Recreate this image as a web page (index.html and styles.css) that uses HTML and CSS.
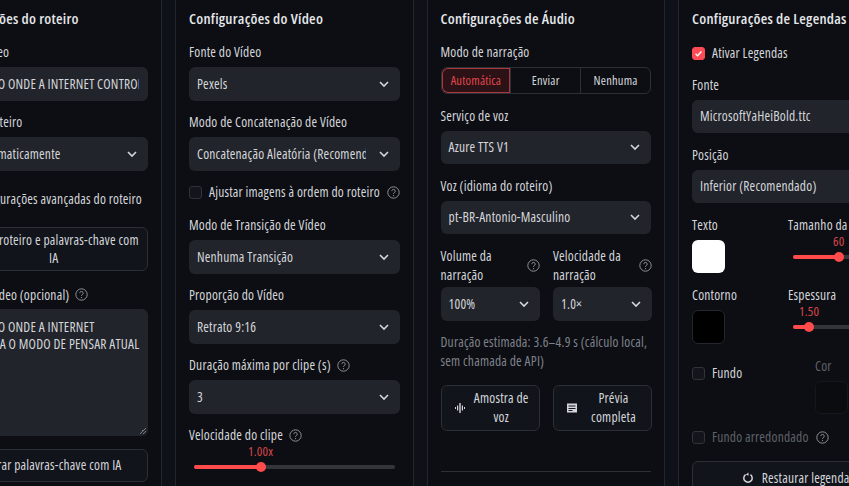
FILE: index.html
```html
<!DOCTYPE html>
<html lang="pt-BR">
<head>
    <meta charset="UTF-8">
    <meta name="viewport" content="width=device-width, initial-scale=1.0">
    <title>Configurações</title>
    <link rel="stylesheet" href="styles.css">
</head>
<body>
    <svg class="icon-defs" width="0" height="0" aria-hidden="true">
        <symbol id="help" viewBox="0 0 16 16">
            <circle cx="8" cy="8" r="7" fill="none" stroke="currentColor" stroke-width="1.2"/>
            <path d="M5.9 6.3a2.1 2.1 0 1 1 3.2 1.8c-.75.45-1.1.85-1.1 1.6" fill="none" stroke="currentColor" stroke-width="1.2"/>
            <circle cx="8" cy="11.8" r=".8" fill="currentColor"/>
        </symbol>
        <symbol id="chevron" viewBox="0 0 12 12">
            <path d="M2 4l4 4 4-4" fill="none" stroke="currentColor" stroke-width="1.6"/>
        </symbol>
    </svg>

    <div class="panels">
        <section class="panel">
            <h2 class="panel-title">Configurações do roteiro</h2>
            <label class="field-label">Título do vídeo</label>
            <div class="input"><span class="clip clip-topic">O UNIVERSO ONDE A INTERNET CONTROLA O MODO DE PENSAR ATUAL</span></div>
            <label class="field-label">Idioma do roteiro</label>
            <div class="input"><span>Gerar automaticamente</span><svg class="chevron"><use href="#chevron"/></svg></div>
            <div class="check-row advanced"><i class="checkbox"></i><span>Configurações avançadas do roteiro</span></div>
            <div class="icon-button ai-button">
                <svg class="btn-icon" viewBox="0 0 16 16"><path d="M8 2l1.5 4.5L14 8l-4.500 1.500L8 14l-1.500-4.500L2 8l4.500-1.500z" fill="currentColor"/></svg>
                <span>Gerar roteiro e palavras-chave com IA</span>
            </div>
            <label class="field-label with-help script-label">Roteiro do vídeo (opcional) <svg class="help"><use href="#help"/></svg></label>
            <div class="textarea"><span>O UNIVERSO ONDE A INTERNET</span><span>E CONTROLA O MODO DE PENSAR ATUAL</span><i class="resize"></i></div>
            <div class="button keywords">Gerar palavras-chave com IA</div>
        </section>

        <section class="panel">
            <h2 class="panel-title">Configurações do Vídeo</h2>
            <label class="field-label">Fonte do Vídeo</label>
            <div class="input"><span>Pexels</span><svg class="chevron"><use href="#chevron"/></svg></div>
            <label class="field-label">Modo de Concatenação de Vídeo</label>
            <div class="input"><span class="clip clip-mode">Concatenação Aleatória (Recomendado)</span><svg class="chevron"><use href="#chevron"/></svg></div>
            <div class="check-row fit-images"><i class="checkbox"></i><span>Ajustar imagens à ordem do roteiro</span><svg class="help"><use href="#help"/></svg></div>
            <label class="field-label">Modo de Transição de Vídeo</label>
            <div class="input"><span>Nenhuma Transição</span><svg class="chevron"><use href="#chevron"/></svg></div>
            <label class="field-label">Proporção do Vídeo</label>
            <div class="input"><span>Retrato 9:16</span><svg class="chevron"><use href="#chevron"/></svg></div>
            <label class="field-label with-help">Duração máxima por clipe (s) <svg class="help"><use href="#help"/></svg></label>
            <div class="input"><span>3</span><svg class="chevron"><use href="#chevron"/></svg></div>
            <label class="field-label with-help tight">Velocidade do clipe <svg class="help"><use href="#help"/></svg></label>
            <div class="slider clip-speed">
                <span class="slider-value">1.00x</span>
                <div class="track"><div class="fill"></div><i class="thumb"></i></div>
            </div>
        </section>

        <section class="panel">
            <h2 class="panel-title">Configurações de Áudio</h2>
            <label class="field-label">Modo de narração</label>
            <div class="segments">
                <span class="segment active">Automática</span>
                <span class="segment">Enviar</span>
                <span class="segment">Nenhuma</span>
            </div>
            <label class="field-label">Serviço de voz</label>
            <div class="input"><span>Azure TTS V1</span><svg class="chevron"><use href="#chevron"/></svg></div>
            <label class="field-label">Voz (idioma do roteiro)</label>
            <div class="input"><span>pt-BR-Antonio-Masculino</span><svg class="chevron"><use href="#chevron"/></svg></div>
            <div class="two-cols">
                <div>
                    <div class="label-help"><span>Volume da narração</span><svg class="help"><use href="#help"/></svg></div>
                    <div class="input"><span>100%</span><svg class="chevron"><use href="#chevron"/></svg></div>
                </div>
                <div>
                    <div class="label-help"><span>Velocidade da narração</span><svg class="help"><use href="#help"/></svg></div>
                    <div class="input"><span>1.0×</span><svg class="chevron"><use href="#chevron"/></svg></div>
                </div>
            </div>
            <p class="caption">Duração estimada: 3.6–4.9 s (cálculo local, sem chamada de API)</p>
            <div class="two-cols">
                <div class="icon-button">
                    <svg class="btn-icon" viewBox="0 0 12 12"><path d="M1 5h1v2H1zM3 3.500h1.200v5H3zM5.300 1h1.400v10H5.300zM7.800 3.500H9v5H7.800zM10 5h1v2h-1z" fill="currentColor"/></svg>
                    <span>Amostra de voz</span>
                </div>
                <div class="icon-button">
                    <svg class="btn-icon" viewBox="0 0 12 12"><path d="M1 1.500h10v9H1z" fill="currentColor"/><path d="M2.500 4h7M2.500 6.500h7M2.500 8.500h4" stroke="#13161c" stroke-width="1" fill="none"/></svg>
                    <span>Prévia completa</span>
                </div>
            </div>
            <hr class="rule">
        </section>

        <section class="panel">
            <h2 class="panel-title">Configurações de Legendas</h2>
            <div class="check-row enable"><i class="checkbox checked"><svg viewBox="0 0 12 12"><path d="M2.800 6.200l2.200 2.200 4.200-4.600" fill="none" stroke="#fff" stroke-width="1.500"/></svg></i><span>Ativar Legendas</span></div>
            <label class="field-label">Fonte</label>
            <div class="input"><span>MicrosoftYaHeiBold.ttc</span></div>
            <label class="field-label">Posição</label>
            <div class="input"><span>Inferior (Recomendado)</span></div>
            <div class="style-row">
                <div>
                    <label class="field-label">Texto</label>
                    <i class="swatch white"></i>
                </div>
                <div>
                    <label class="field-label tight">Tamanho da fonte</label>
                    <div class="slider size">
                        <span class="slider-value">60</span>
                        <div class="track"><div class="fill"></div><i class="thumb"></i></div>
                    </div>
                </div>
            </div>
            <div class="style-row">
                <div>
                    <label class="field-label">Contorno</label>
                    <i class="swatch black"></i>
                </div>
                <div>
                    <label class="field-label tight">Espessura</label>
                    <div class="slider stroke">
                        <span class="slider-value">1.50</span>
                        <div class="track"><div class="fill"></div><i class="thumb"></i></div>
                    </div>
                </div>
            </div>
            <div class="style-row bg-row">
                <div class="check-row background"><i class="checkbox"></i><span>Fundo</span></div>
                <div class="color-col">
                    <label class="field-label muted">Cor</label>
                    <i class="swatch faded"></i>
                </div>
            </div>
            <div class="check-row disabled"><i class="checkbox"></i><span>Fundo arredondado</span><svg class="help"><use href="#help"/></svg></div>
            <div class="button restore">
                <svg class="btn-icon" viewBox="0 0 12 12"><path d="M3.600 2.600a4.200 4.200 0 1 0 4.800 0" fill="none" stroke="currentColor" stroke-width="1.500"/><path d="M6.500 0.500v3.200L3.800 2.400z" fill="currentColor"/></svg>
                <span>Restaurar legendas</span>
            </div>
        </section>
    </div>
</body>
</html>
```

FILE: styles.css
```css
* {
    box-sizing: border-box;
}

html, body {
    margin: 0;
    height: 486px;
    overflow: hidden;
    background: #0e1117;
}

body {
    font-family: "Open Sans", "Noto Sans", sans-serif;
    font-size: 13.5px;
    font-stretch: 81%;
    letter-spacing: 0.2px;
    color: #d4d6da;
}

.icon-defs {
    display: block;
    height: 0;
}

.panels {
    display: flex;
    gap: 13px;
    width: 1100px;
    height: 486px;
    margin-left: -76.5px;
}

.panel {
    flex: 0 0 238.5px;
    min-width: 0;
    height: 100%;
    padding: 9px 13px 0 13px;
    border: 1px solid #23262c;
    border-width: 0 1px;
    background: #0c0e13;
    overflow: hidden;
}

.panel-title {
    margin: 0 0 16px;
    font-size: 15px;
    letter-spacing: 0.25px;
    line-height: 18px;
    font-weight: 600;
    color: #e4e6e9;
    white-space: nowrap;
}

.field-label {
    display: block;
    line-height: 18px;
    margin-bottom: 6px;
    white-space: nowrap;
}

.tight {
    margin-bottom: 0;
}

.script-label {
    margin-bottom: 5px;
}

.with-help {
    display: flex;
    align-items: center;
    gap: 6px;
}

.input {
    display: flex;
    align-items: center;
    justify-content: space-between;
    height: 33.5px;
    padding: 0 8px;
    margin-bottom: 12.5px;
    background: #22242b;
    border-radius: 6px;
    white-space: nowrap;
    overflow: hidden;
}

.clip {
    display: block;
    overflow: hidden;
}

.clip-topic {
    width: 193px;
}

.clip-mode {
    width: 169px;
}

.chevron {
    flex: none;
    width: 12px;
    height: 12px;
    margin-right: 2px;
    color: #d4d6da;
}

.help {
    flex: none;
    width: 13px;
    height: 13px;
    color: #8f939b;
}

.check-row {
    display: flex;
    align-items: center;
    gap: 7px;
    line-height: 18px;
    white-space: nowrap;
}

.checkbox {
    flex: none;
    width: 13px;
    height: 13px;
    border: 1px solid #30333a;
    border-radius: 3px;
    background: #12151b;
}

.checked {
    background: #ff4b55;
    border-color: #ff4b55;
}

.checked svg {
    display: block;
}

.advanced {
    margin: 19px 0 19px;
    padding-left: 12px;
}

.fit-images {
    margin: 1px 0 15px;
}

.button {
    text-align: center;
    border: 1px solid #2c2f36;
    border-radius: 6px;
    background: #11141a;
    line-height: 18px;
}

.keywords {
    height: 33.5px;
    padding: 6px 0 0 20px;
    white-space: nowrap;
}

.textarea {
    position: relative;
    display: flex;
    flex-direction: column;
    height: 127px;
    padding: 10px 8px;
    margin-bottom: 13px;
    background: #22242b;
    border-radius: 6px;
    line-height: 17px;
    white-space: nowrap;
    overflow: hidden;
}

.resize {
    position: absolute;
    right: 2px;
    bottom: 2px;
    width: 7px;
    height: 7px;
    background: linear-gradient(135deg, transparent 50%, #777a81 50%, #777a81 60%, transparent 60%, transparent 75%, #777a81 75%, #777a81 85%, transparent 85%);
}

.slider {
    position: relative;
    padding: 0 5px;
}

.slider-value {
    display: block;
    color: #d9474c;
    font-size: 13px;
    line-height: 14px;
    white-space: nowrap;
}

.track {
    position: relative;
    height: 4px;
    margin-top: 7px;
    background: #33353b;
    border-radius: 2px;
}

.fill {
    height: 100%;
    background: #ff4b4b;
    border-radius: 2px;
}

.thumb {
    position: absolute;
    top: -3px;
    width: 10px;
    height: 10px;
    margin-left: -5px;
    border-radius: 50%;
    background: #ff4b4b;
}

.clip-speed .slider-value {
    padding-left: 54px;
}

.clip-speed .fill {
    width: 67px;
}

.clip-speed .thumb {
    left: 67px;
}

.size .slider-value {
    padding-left: 40px;
}

.size .fill {
    width: 46px;
}

.size .thumb {
    left: 46px;
}

.stroke .slider-value {
    padding-left: 6px;
}

.stroke .fill {
    width: 16px;
}

.stroke .thumb {
    left: 16px;
}

.segments {
    display: flex;
    height: 26.500px;
    margin-bottom: 13px;
    border: 1px solid #2c2f36;
    border-radius: 6px;
    font-size: 12.5px;
    overflow: hidden;
}

.segment {
    flex: 1;
    display: flex;
    align-items: center;
    justify-content: center;
    border-left: 1px solid #2c2f36;
}

.segment:first-child {
    border-left: 0;
}

.segment.active {
    color: #e0474d;
    background: #2a1216;
    box-shadow: inset 0 0 0 1px #a83a3f;
    border-radius: 6px 0 0 6px;
}

.two-cols {
    display: grid;
    grid-template-columns: 99.5px 99px;
    gap: 13px;
}

.label-help {
    display: flex;
    align-items: center;
    justify-content: space-between;
    line-height: 19px;
    margin-bottom: 2.500px;
}

.label-help span {
    width: 76px;
}

.caption {
    margin: 0 0 13.500px;
    line-height: 19px;
    color: #7f828a;
}

.icon-button {
    display: flex;
    align-items: center;
    gap: 6px;
    height: 46px;
    padding: 0 8px 0 12px;
    text-align: center;
    line-height: 19px;
    border: 1px solid #2c2f36;
    border-radius: 6px;
    background: #11141a;
}

.icon-button span {
    flex: 1;
}

.ai-button {
    margin-bottom: 15px;
    height: 44px;
    line-height: 18px;
}

.btn-icon {
    flex: none;
    width: 12px;
    height: 12px;
}

.rule {
    height: 1px;
    margin: 40.500px 0 0;
    border: 0;
    background: #2c2f36;
}

.enable {
    margin: 17px 0 13.500px;
}

.style-row {
    display: grid;
    grid-template-columns: 96px 116px;
    margin-bottom: 13px;
}

.swatch {
    display: block;
    width: 33px;
    height: 33.500px;
    border-radius: 6px;
}

.white {
    background: #fff;
}

.black {
    background: #000;
    border: 1px solid #23262c;
}

.faded {
    background: #0a0c10;
    border: 1px solid #14171d;
}

.background {
    align-self: start;
    margin-top: 7.500px;
}

.color-col {
    margin-left: 27px;
}

.muted,
.disabled {
    color: #5f6269;
}

.disabled {
    margin-top: 14px;
}

.restore {
    display: flex;
    align-items: center;
    justify-content: center;
    gap: 8px;
    width: 212px;
    height: 34px;
    margin-top: 15px;
    white-space: nowrap;
}
```
